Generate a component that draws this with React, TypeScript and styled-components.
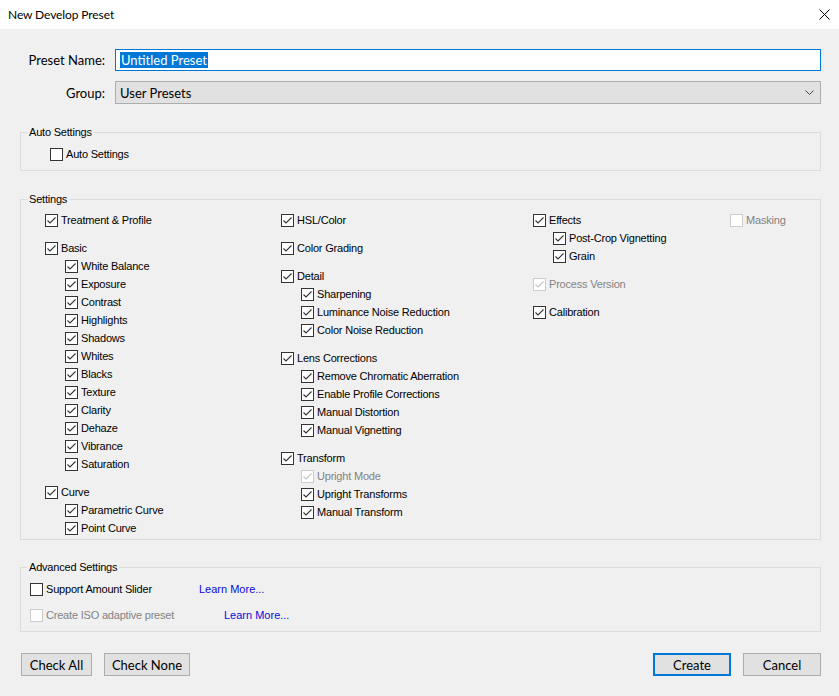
import React from "react";
import styled, { createGlobalStyle } from "styled-components";

const Global = createGlobalStyle`
  html, body { margin: 0; padding: 0; background: #f0f0f0; }
  body { font-family: "Liberation Sans", Arial, sans-serif; font-size: 12px; color: #000; }
`;

const UI = `"Liberation Sans", Arial, sans-serif`;
const TOP = `Lato, "Liberation Sans", Arial, sans-serif`;

const Window = styled.div`
  width: 839px;
  height: 696px;
  background: #f0f0f0;
  display: flex;
  flex-direction: column;
  overflow: hidden;
  font-family: ${UI};
  font-size: 11px;
  letter-spacing: -0.2px;
`;

const TitleBar = styled.div`
  height: 29px;
  background: #fff;
  display: flex;
  align-items: center;
  justify-content: space-between;
  padding: 0 9px 1px 8px;
  box-sizing: border-box;
`;

const Title = styled.span`
  font-family: ${TOP};
  font-size: 12px;
  letter-spacing: -0.1px;
  color: #000;
`;

const Body = styled.div`
  display: flex;
  flex-direction: column;
  padding: 20px 18px 0 20px;
`;

const FieldRow = styled.div<{ $mt?: number }>`
  display: grid;
  grid-template-columns: 85px 1fr;
  column-gap: 10px;
  align-items: center;
  margin-top: ${(p) => p.$mt ?? 0}px;
  font-family: ${TOP};
  font-size: 13px;
  letter-spacing: 0;
`;

const FieldLabel = styled.label`
  text-align: right;
`;

const TextInput = styled.div`
  height: 22px;
  box-sizing: border-box;
  border: 1px solid #0078d7;
  background: #fff;
  display: flex;
  align-items: center;
  padding-left: 4px;
`;

const Selected = styled.span`
  background: #0078d7;
  color: #fff;
  padding: 0 1px;
  line-height: 16px;
`;

const Select = styled.div`
  height: 23px;
  box-sizing: border-box;
  border: 1px solid #adadad;
  background: #e1e1e1;
  display: flex;
  align-items: center;
  justify-content: space-between;
  padding: 0 6px 0 4px;
`;

const Group = styled.fieldset<{ $mt: number; $h: number }>`
  margin: ${(p) => p.$mt}px 0 0 0;
  border: 1px solid #dcdcdc;
  padding: 0;
  height: ${(p) => p.$h}px;
  box-sizing: border-box;
  min-width: 0;
`;

const Legend = styled.legend`
  margin-left: 6px;
  padding: 0 2px 0 2px;
  line-height: 15px;
  color: #000;
`;

const AutoBody = styled.div`
  padding: 5px 0 0 29px;
`;

const Columns = styled.div`
  display: grid;
  grid-template-columns: 236px 252px 197px auto;
  padding: 4px 0 0 24px;
`;

const Column = styled.div`
  display: flex;
  flex-direction: column;
  gap: 10px;
`;

const Block = styled.div`
  display: flex;
  flex-direction: column;
`;

const Sub = styled.div`
  display: flex;
  flex-direction: column;
  padding-left: 20px;
`;

const Row = styled.div<{ $disabled?: boolean }>`
  display: flex;
  align-items: center;
  height: 18px;
  gap: 3px;
  color: ${(p) => (p.$disabled ? "#838383" : "#000")};
  white-space: nowrap;
`;

const Box = styled.span<{ $disabled?: boolean }>`
  width: 13px;
  height: 13px;
  box-sizing: border-box;
  border: 1px solid ${(p) => (p.$disabled ? "#cccccc" : "#333333")};
  background: #fff;
  display: inline-flex;
  align-items: center;
  justify-content: center;
  flex: none;
`;

const AdvBody = styled.div`
  display: flex;
  flex-direction: column;
  gap: 8px;
  padding: 5px 0 0 9px;
`;

const AdvRow = styled.div<{ $linkX: number }>`
  display: grid;
  grid-template-columns: ${(p) => p.$linkX}px auto;
  align-items: center;
`;

const Link = styled.span`
  color: #0a0adc;
  letter-spacing: 0;
`;

const ButtonBar = styled.div`
  display: flex;
  align-items: center;
  margin-top: 21px;
  padding-left: 1px;
  gap: 12px;
`;

const Spacer = styled.div`
  flex: 1;
`;

const Button = styled.button<{ $w: number; $primary?: boolean }>`
  width: ${(p) => p.$w}px;
  height: 23px;
  box-sizing: border-box;
  font-family: ${TOP};
  font-size: 13px;
  color: #000;
  background: #e1e1e1;
  border: ${(p) => (p.$primary ? "2px solid #0078d7" : "1px solid #adadad")};
  padding: 0;
  margin: 0;
`;

const Check = ({ checked = true, disabled = false }: { checked?: boolean; disabled?: boolean }) => (
  <Box $disabled={disabled}>
    {checked && (
      <svg width="11" height="11" viewBox="0 0 11 11">
        <polyline
          points="1.5,5.5 4,8 9.5,2.5"
          fill="none"
          stroke={disabled ? "#c4c4c4" : "#333"}
          strokeWidth="1.1"
        />
      </svg>
    )}
  </Box>
);

const Item = ({ label, checked = true, disabled = false }: { label: string; checked?: boolean; disabled?: boolean }) => (
  <Row $disabled={disabled}>
    <Check checked={checked} disabled={disabled} />
    <span>{label}</span>
  </Row>
);

const Tree = ({ label, children, checked = true, disabled = false }: { label: string; children?: string[]; checked?: boolean; disabled?: boolean }) => (
  <Block>
    <Item label={label} checked={checked} disabled={disabled} />
    {children && (
      <Sub>
        {children.map((c) => (
          <Item key={c} label={c} disabled={c === "Upright Mode"} />
        ))}
      </Sub>
    )}
  </Block>
);

export default function App() {
  return (
    <Window>
      <Global />
      <TitleBar>
        <Title>New Develop Preset</Title>
        <svg width="11" height="11" viewBox="0 0 11 11">
          <path d="M0.5 0.5 L10.5 10.5 M10.5 0.5 L0.5 10.5" stroke="#000" strokeWidth="1" />
        </svg>
      </TitleBar>
      <Body>
        <FieldRow>
          <FieldLabel>Preset Name:</FieldLabel>
          <TextInput>
            <Selected>Untitled Preset</Selected>
          </TextInput>
        </FieldRow>
        <FieldRow $mt={10}>
          <FieldLabel>Group:</FieldLabel>
          <Select>
            <span>User Presets</span>
            <svg width="9" height="6" viewBox="0 0 9 6">
              <polyline points="0.5,0.5 4.5,4.5 8.5,0.5" fill="none" stroke="#444" strokeWidth="1" />
            </svg>
          </Select>
        </FieldRow>

        <Group $mt={21} $h={46}>
          <Legend>Auto Settings</Legend>
          <AutoBody>
            <Item label="Auto Settings" checked={false} />
          </AutoBody>
        </Group>

        <Group $mt={21} $h={348}>
          <Legend>Settings</Legend>
          <Columns>
            <Column>
              <Tree label="Treatment & Profile" />
              <Tree
                label="Basic"
                children={[
                  "White Balance",
                  "Exposure",
                  "Contrast",
                  "Highlights",
                  "Shadows",
                  "Whites",
                  "Blacks",
                  "Texture",
                  "Clarity",
                  "Dehaze",
                  "Vibrance",
                  "Saturation",
                ]}
              />
              <Tree label="Curve" children={["Parametric Curve", "Point Curve"]} />
            </Column>
            <Column>
              <Tree label="HSL/Color" />
              <Tree label="Color Grading" />
              <Tree label="Detail" children={["Sharpening", "Luminance Noise Reduction", "Color Noise Reduction"]} />
              <Tree
                label="Lens Corrections"
                children={["Remove Chromatic Aberration", "Enable Profile Corrections", "Manual Distortion", "Manual Vignetting"]}
              />
              <Tree label="Transform" children={["Upright Mode", "Upright Transforms", "Manual Transform"]} />
            </Column>
            <Column>
              <Tree label="Effects" children={["Post-Crop Vignetting", "Grain"]} />
              <Tree label="Process Version" disabled />
              <Tree label="Calibration" />
            </Column>
            <Column>
              <Tree label="Masking" checked={false} disabled />
            </Column>
          </Columns>
        </Group>

        <Group $mt={20} $h={72}>
          <Legend>Advanced Settings</Legend>
          <AdvBody>
            <AdvRow $linkX={169}>
              <Item label="Support Amount Slider" checked={false} />
              <Link>Learn More...</Link>
            </AdvRow>
            <AdvRow $linkX={194}>
              <Item label="Create ISO adaptive preset" checked={false} disabled />
              <Link>Learn More...</Link>
            </AdvRow>
          </AdvBody>
        </Group>

        <ButtonBar>
          <Button $w={71}>Check All</Button>
          <Button $w={86}>Check None</Button>
          <Spacer />
          <Button $w={78} $primary>Create</Button>
          <Button $w={78}>Cancel</Button>
        </ButtonBar>
      </Body>
    </Window>
  );
}
